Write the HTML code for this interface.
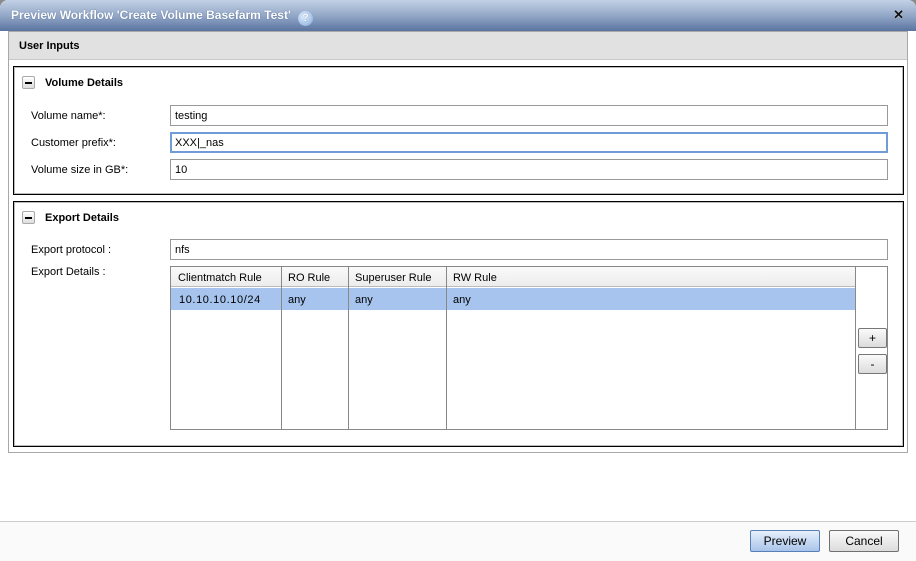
<!DOCTYPE html>
<html><head><style>
*{box-sizing:border-box}
body{margin:0;width:916px;height:561px;overflow:hidden;background:#8a8a8a;font-family:"Liberation Sans",Tahoma,sans-serif;font-size:11px;color:#000}
.win{position:absolute;left:0;top:0;width:916px;height:561px;background:#fff;border-radius:8px 8px 0 0;overflow:hidden}
.title{position:absolute;left:0;top:0;width:916px;height:31px;background:linear-gradient(#c3d1e6,#8ea3c4 55%,#5a73a0);color:#fff;font-weight:bold;font-size:12px;padding:8px 0 0 11px;text-shadow:0 0 1px #34507a}
.help{display:inline-block;width:15px;height:15px;border-radius:50%;background:radial-gradient(circle at 40% 35%,#e4f0ff,#7fa6d8);color:#fff;font-size:11px;text-align:center;line-height:15px;margin-left:7px;vertical-align:-2px;text-shadow:0 0 1px #3b6aa8}
.close{position:absolute;right:12px;top:7px;font-size:13px;font-weight:bold;color:#111;text-shadow:0 0 1px #fff}
.panel{position:absolute;left:8px;top:31px;width:900px;height:422px;border:1px solid #a8a8a8;background:#fff}
.ph{height:28px;background:#e1e1e1;border-bottom:1px solid #c8c8c8;font-weight:bold;padding:8px 0 0 10px}
.fs{position:absolute;left:4px;width:891px;border:1px solid #000;outline:1px solid #bbb;outline-offset:-2px}
.leg{position:absolute;left:8px;top:9px;font-weight:bold}
.min{display:inline-block;width:13px;height:13px;border:1px solid #aaa;border-radius:2px;background:linear-gradient(#fff,#ddd);position:relative;vertical-align:-3px;margin-right:10px}
.min:after{content:"";position:absolute;left:2px;top:5px;width:7px;height:2px;background:#000}
.lbl{position:absolute;left:17px}
.inp{position:absolute;left:156px;width:718px;height:21px;border:1px solid #999;background:#fff;padding:4px 0 0 4px}
.grid{position:absolute;left:156px;top:64px;width:686px;height:164px;border:1px solid #888;background:#fff}
.hdr{height:20px;background:linear-gradient(#fafafa,#ececec);border-bottom:1px solid #bbb;position:relative}
.c{position:absolute;top:0;height:162px;border-right:1px solid #888;padding:0}
.side{position:absolute;left:842px;top:64px;width:32px;height:164px;border:1px solid #888;border-left:none}
.b{position:absolute;left:2px;width:29px;height:20px;border:1px solid #777;border-radius:2px;background:linear-gradient(#fafafa,#dcdcdc);text-align:center;line-height:18px;font-size:12px}
.foot{position:absolute;left:0;top:521px;width:916px;height:40px;border-top:1px solid #ccc;background:#fafafa}
.btn{position:absolute;top:8px;width:70px;height:22px;border:1px solid #707070;border-radius:2px;text-align:center;line-height:20px;font-size:12px}
</style></head><body>
<div class="win">
<div class="title">Preview Workflow 'Create Volume Basefarm Test'<span class="help">?</span><span class="close">✕</span></div>
<div class="panel">
<div class="ph">User Inputs</div>
<div class="fs" style="top:34px;height:129px">
<div class="leg"><span class="min"></span>Volume Details</div>
<div class="lbl" style="top:43px">Volume name*:</div><div class="inp" style="top:38px">testing</div>
<div class="lbl" style="top:70px">Customer prefix*:</div><div class="inp" style="top:65px;border:2px solid #6f9bd6;padding:3px 0 0 3px">XXX|_nas</div>
<div class="lbl" style="top:97px">Volume size in GB*:</div><div class="inp" style="top:92px">10</div>
</div>
<div class="fs" style="top:169px;height:246px">
<div class="leg"><span class="min"></span>Export Details</div>
<div class="lbl" style="top:42px">Export protocol :</div><div class="inp" style="top:37px">nfs</div>
<div class="lbl" style="top:64px">Export Details :</div>
<div class="grid">
<div class="hdr"></div>
<div style="position:absolute;left:0;top:21px;width:684px;height:22px;background:#a6c4ee"></div>
<div class="c" style="left:0;width:111px"><div style="padding:5px 7px">Clientmatch Rule</div><div style="padding:5px 8px;letter-spacing:0.6px">10.10.10.10/24</div></div>
<div class="c" style="left:111px;width:67px"><div style="padding:5px 6px">RO Rule</div><div style="padding:5px 6px">any</div></div>
<div class="c" style="left:178px;width:98px"><div style="padding:5px 6px">Superuser Rule</div><div style="padding:5px 6px">any</div></div>
<div class="c" style="left:276px;width:408px;border-right:none"><div style="padding:5px 6px">RW Rule</div><div style="padding:5px 6px">any</div></div>
</div>
<div class="side"><div class="b" style="top:61px">+</div><div class="b" style="top:87px">-</div></div>
</div>
</div>
<div class="foot">
<div class="btn" style="left:750px;background:linear-gradient(#e6effa,#a9c4ea);border-color:#5580b8">Preview</div>
<div class="btn" style="left:829px;background:linear-gradient(#fafafa,#dcdcdc)">Cancel</div>
</div>
</div>
</body></html>
